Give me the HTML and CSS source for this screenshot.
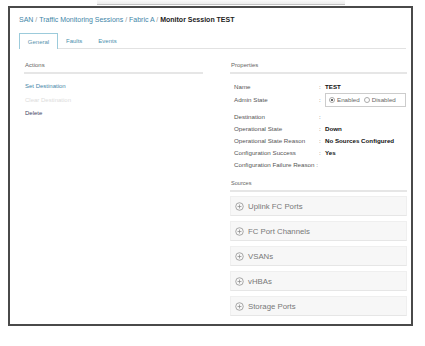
FILE: index.html
```html
<!DOCTYPE html>
<html lang="en">
<head>
  <meta charset="UTF-8">
  <title>Monitor Session TEST</title>
  <link rel="stylesheet" href="styles.css">
</head>
<body>
  <div class="top-strip"></div>

  <div class="frame">
    <div class="crumbs">
      <a href="#">SAN</a> <span class="sep">/</span>
      <a href="#">Traffic Monitoring Sessions</a> <span class="sep">/</span>
      <a href="#">Fabric A</a> <span class="sep">/</span>
      <strong>Monitor Session TEST</strong>
    </div>

    <div class="tabs">
      <span class="tab active">General</span>
      <span class="tab">Faults</span>
      <span class="tab">Events</span>
      <span class="tab-fill"></span>
    </div>

    <div class="columns">
      <div class="col">
        <div class="section-title">Actions</div>
        <a href="#" class="action">Set Destination</a>
        <span class="action disabled">Clear Destination</span>
        <a href="#" class="action dark">Delete</a>
      </div>

      <div class="col">
        <div class="section-title">Properties</div>
        <div class="props">
          <div class="row"><span class="label">Name</span><span class="colon">:</span><span class="value">TEST</span></div>
          <div class="row admin"><span class="label">Admin State</span><span class="colon">:</span>
            <span class="radios">
              <span class="radio on"></span><span class="opt">Enabled</span>
              <span class="radio"></span><span class="opt">Disabled</span>
            </span>
          </div>
          <div class="row"><span class="label">Destination</span><span class="colon">:</span><span class="value"></span></div>
          <div class="row"><span class="label">Operational State</span><span class="colon">:</span><span class="value">Down</span></div>
          <div class="row"><span class="label">Operational State Reason</span><span class="colon">:</span><span class="value">No Sources Configured</span></div>
          <div class="row"><span class="label">Configuration Success</span><span class="colon">:</span><span class="value">Yes</span></div>
          <div class="row"><span class="label wide">Configuration Failure Reason :</span></div>
        </div>

        <div class="section-title sources">Sources</div>
        <div class="panel"><svg class="plus" viewBox="0 0 10 10"><circle cx="5" cy="5" r="4.2"/><path d="M5 2.8v4.4M2.8 5h4.4"/></svg>Uplink FC Ports</div>
        <div class="panel"><svg class="plus" viewBox="0 0 10 10"><circle cx="5" cy="5" r="4.2"/><path d="M5 2.8v4.4M2.8 5h4.4"/></svg>FC Port Channels</div>
        <div class="panel"><svg class="plus" viewBox="0 0 10 10"><circle cx="5" cy="5" r="4.2"/><path d="M5 2.8v4.4M2.8 5h4.4"/></svg>VSANs</div>
        <div class="panel"><svg class="plus" viewBox="0 0 10 10"><circle cx="5" cy="5" r="4.2"/><path d="M5 2.8v4.4M2.8 5h4.4"/></svg>vHBAs</div>
        <div class="panel"><svg class="plus" viewBox="0 0 10 10"><circle cx="5" cy="5" r="4.2"/><path d="M5 2.8v4.4M2.8 5h4.4"/></svg>Storage Ports</div>
      </div>
    </div>
  </div>
</body>
</html>
```

FILE: styles.css
```css
body {
  margin: 0;
  background: #fff;
  font-family: "Liberation Sans", Arial, sans-serif;
  color: #333;
}
.top-strip {
  margin-left: 97px;
  width: 248px;
  height: 4px;
  background: linear-gradient(#fafafa, #ececec);
  border-bottom: 1px solid #c4c4c4;
}
.frame {
  box-sizing: border-box;
  margin: 1px 0 0 8px;
  width: 405px;
  height: 320px;
  border: 2px solid #4a4a4a;
  padding: 8px 5px 0 9px;
  background: #fff;
}
.crumbs {
  font-size: 7px;
  line-height: 8px;
  color: #999;
  white-space: nowrap;
}
.crumbs a {
  color: #3f86a8;
  text-decoration: none;
}
.crumbs strong {
  color: #222;
}
.tabs {
  display: flex;
  margin-top: 9px;
  height: 16px;
}
.tab {
  box-sizing: border-box;
  font-size: 6px;
  line-height: 16px;
  color: #4a8fae;
  padding: 0 8px;
  border-bottom: 1px solid #e2e2e2;
}
.tab.active {
  width: 39px;
  padding: 0;
  text-align: center;
  border: 1px solid #9ccbdb;
  border-bottom: none;
  color: #5a93ad;
}
.tab-fill {
  flex: 1;
  border-bottom: 1px solid #e2e2e2;
}
.columns {
  display: grid;
  grid-template-columns: 179px 177px;
  column-gap: 27px;
  padding-left: 5px;
  margin-top: 12px;
}
.section-title {
  font-size: 6px;
  line-height: 8px;
  color: #666;
  padding: 0 1px 3px;
  border-bottom: 2px solid #e6e6e6;
  margin-bottom: 6px;
}
.action {
  display: block;
  font-size: 6px;
  line-height: 13.5px;
  color: #3f86a8;
  text-decoration: none;
  padding-left: 1px;
}
.action.disabled {
  color: #dcdcdc;
}
.action.dark {
  color: #446;
}
.props {
  padding-left: 4px;
}
.row {
  display: flex;
  align-items: center;
  height: 12px;
  font-size: 6.2px;
  color: #555;
}
.row.admin {
  height: 15px;
  margin-bottom: 3px;
}
.label {
  width: 85px;
  white-space: nowrap;
}
.label.wide {
  width: auto;
}
.colon {
  width: 6px;
}
.value {
  font-weight: bold;
  color: #111;
}
.radios {
  display: flex;
  align-items: center;
  box-sizing: border-box;
  width: 81px;
  height: 14px;
  border: 1px solid #ccc;
  padding-left: 3px;
  color: #666;
}
.radio {
  box-sizing: border-box;
  width: 6px;
  height: 6px;
  border: 1px solid #aaa;
  border-radius: 50%;
  margin-right: 2px;
  position: relative;
}
.radio.on::after {
  content: "";
  position: absolute;
  left: 1px;
  top: 1px;
  width: 2px;
  height: 2px;
  border-radius: 50%;
  background: #333;
}
.opt {
  margin-right: 4px;
}
.section-title.sources {
  margin-top: 9px;
  margin-bottom: 4px;
  font-size: 5.6px;
}
.panel {
  display: flex;
  align-items: center;
  box-sizing: border-box;
  height: 20px;
  margin-bottom: 5px;
  padding-left: 4px;
  background: #f7f7f7;
  border: 1px solid #efefef;
  border-bottom-color: #e6e6e6;
  font-size: 7.8px;
  color: #777;
}
.plus {
  width: 9px;
  height: 9px;
  margin-right: 4px;
  fill: none;
  stroke: #8a8a8a;
  stroke-width: 0.8;
}
```
